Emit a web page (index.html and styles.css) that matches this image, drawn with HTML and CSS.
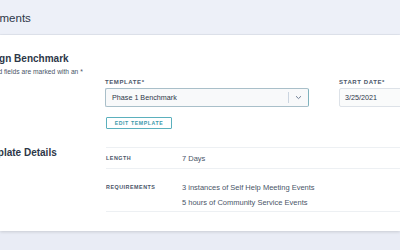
FILE: index.html
```html
<!DOCTYPE html>
<html lang="en">
<head>
    <meta charset="UTF-8">
    <meta name="viewport" content="width=device-width, initial-scale=1.0">
    <title>Assignments</title>
    <link rel="stylesheet" href="styles.css">
</head>
<body>
    <header class="page-header">
        <h1>Assignments</h1>
    </header>

    <main class="card">
        <section class="section">
            <div class="section-info">
                <h2>Assign Benchmark</h2>
                <p class="hint">Required fields are marked with an *</p>
            </div>
            <div class="section-body form-body">
                <div class="form-row">
                    <div class="field field-template">
                        <label for="template">Template*</label>
                        <div class="select">
                            <span class="select-value">Phase 1 Benchmark</span>
                            <span class="select-divider"></span>
                            <svg class="select-chevron" width="7" height="5" viewBox="0 0 7 5">
                                <path d="M1 1.2 L3.5 3.6 L6 1.2" fill="none" stroke="#718096" stroke-width="1"/>
                            </svg>
                        </div>
                    </div>
                    <div class="field field-date">
                        <label for="startDate">Start Date*</label>
                        <input type="text" id="startDate" value="3/25/2021">
                    </div>
                </div>
                <button type="button" class="btn-outline">Edit Template</button>
            </div>
        </section>

        <section class="section">
            <div class="section-info">
                <h2>Template Details</h2>
            </div>
            <div class="section-body">
                <div class="details">
                    <div class="details-row">
                        <div class="details-label">Length</div>
                        <div class="details-value">
                            <div>7 Days</div>
                        </div>
                    </div>
                    <div class="details-row details-row-tall">
                        <div class="details-label">Requirements</div>
                        <div class="details-value">
                            <div>3 instances of Self Help Meeting Events</div>
                            <div>5 hours of Community Service Events</div>
                        </div>
                    </div>
                </div>
            </div>
        </section>
    </main>
</body>
</html>
```

FILE: styles.css
```css
body {
    font-family: "Liberation Sans", Arial, sans-serif;
    background-color: #e9ecf5;
    color: #2d3748;
    margin: 0;
    width: 400px;
    height: 250px;
    overflow: hidden;
}
.page-header {
    height: 34px;
    background: #edf0f8;
    border-bottom: 1px solid #e2e6ef;
    display: flex;
    align-items: center;
}
.page-header h1 {
    margin: 1px 0 0 -35px;
    font-size: 11.5px;
    font-weight: 500;
    line-height: 14px;
    color: #2d3748;
}
.card {
    background: #ffffff;
    box-shadow: 0 1px 3px rgba(0, 0, 0, 0.14);
    padding: 18px 0 19px;
}
.section {
    display: flex;
}
.section + .section {
    margin-top: 18px;
}
.section-info {
    width: 128px;
    margin-left: -22px;
    flex-shrink: 0;
}
.section-info h2 {
    margin: 0;
    font-size: 10px;
    font-weight: 600;
    line-height: 12px;
    color: #2d3748;
}
.hint {
    margin: 3px 0 0 -3px;
    font-size: 6.7px;
    line-height: 8px;
    color: #4a5568;
}
.section-body {
    flex: 1;
}
.form-body {
    padding-top: 26px;
}
.form-row {
    display: flex;
    gap: 30px;
}
.field label {
    display: block;
    font-size: 6px;
    font-weight: 700;
    line-height: 7px;
    letter-spacing: 0.6px;
    text-transform: uppercase;
    color: #4a5568;
    margin-bottom: 2px;
}
.field-template {
    width: 204px;
    margin-left: -1px;
}
.select {
    height: 19px;
    box-sizing: border-box;
    border: 1px solid #a9bfc9;
    border-right-color: #7fb2bd;
    border-radius: 2px;
    background: #f8f9fa;
    display: flex;
    align-items: center;
    padding-left: 6px;
}
.select-value {
    flex: 1;
    font-size: 7.2px;
    color: #2d3748;
}
.select-divider {
    width: 1px;
    height: 11px;
    background: #cbd5e0;
}
.select-chevron {
    margin: 0 6px 0 6px;
}
.field-date input {
    display: block;
    width: 100px;
    height: 19px;
    box-sizing: border-box;
    border: 1px solid #dde2e8;
    border-radius: 2px;
    background: #fafbfb;
    padding: 0 5px;
    font-family: inherit;
    font-size: 7.2px;
    color: #2d3748;
}
.btn-outline {
    margin-top: 10px;
    height: 12px;
    width: 66px;
    padding: 0;
    background: #ffffff;
    border: 1px solid #5bb0bd;
    border-radius: 1px;
    font-family: inherit;
    font-size: 5.2px;
    font-weight: 700;
    letter-spacing: 0.6px;
    text-transform: uppercase;
    color: #3a9aab;
    cursor: pointer;
}
.details {
    border-top: 1px solid #edf0f3;
}
.details-row {
    display: flex;
    border-bottom: 1px solid #edf0f3;
    padding: 3px 0 2px;
    line-height: 15px;
}
.details-row-tall {
    padding: 11px 0 1px;
}
.details-label {
    width: 76px;
    flex-shrink: 0;
    font-size: 5.4px;
    font-weight: 600;
    letter-spacing: 0.5px;
    text-transform: uppercase;
    color: #4a5568;
}
.details-value {
    font-size: 7.5px;
    color: #4a5568;
}
```
